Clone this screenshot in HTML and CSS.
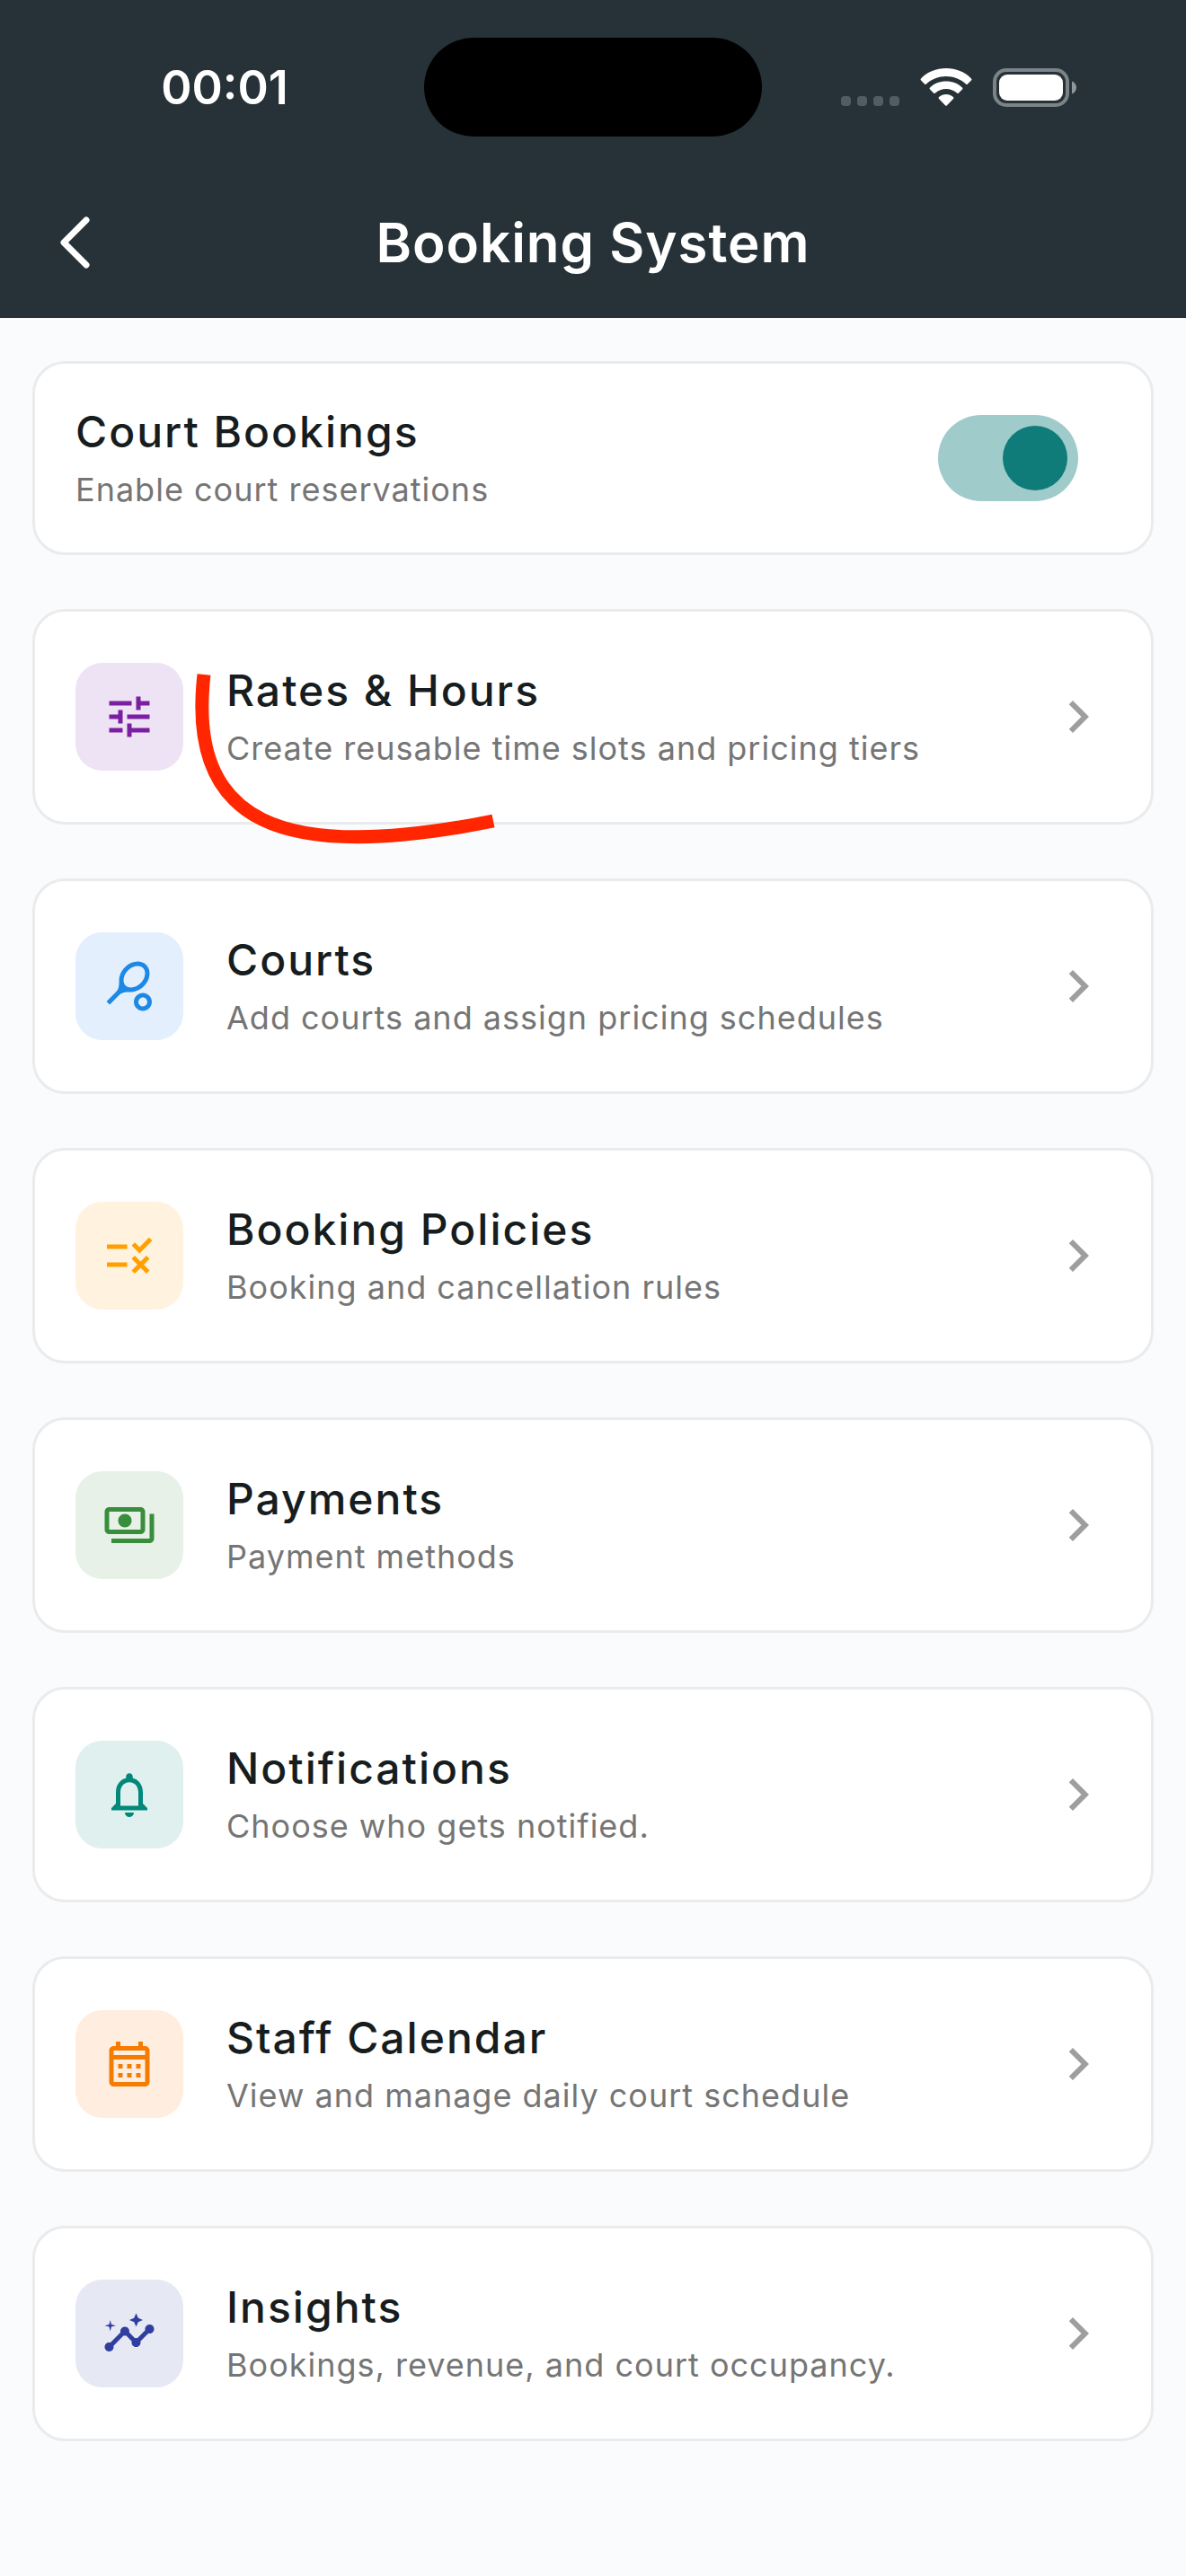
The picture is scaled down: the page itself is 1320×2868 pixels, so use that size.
FILE: index.html
```
<!DOCTYPE html>
<html lang="en">
<head>
    <meta charset="UTF-8">
    <meta name="viewport" content="width=device-width, initial-scale=1.0">
    <title>Booking System</title>
    <link rel="stylesheet" href="styles.css">
</head>
<body>

<header class="header">
    <div class="status-bar">
        <span class="time">00:01</span>
        <div class="island"></div>
        <div class="status-icons">
            <svg class="signal" viewBox="0 0 65 12" width="65" height="12" aria-hidden="true">
                <rect x="0" width="11" height="11" rx="4"/>
                <rect x="18" width="11" height="11" rx="4"/>
                <rect x="36" width="11" height="11" rx="4"/>
                <rect x="54" width="11" height="11" rx="4"/>
            </svg>
            <svg class="wifi" viewBox="0 0 58 43" width="58" height="43" aria-hidden="true">
                <path d="M29 0C18 0 8 4 1 11.500Q0 12.500 1 13.500L5 17.500Q6 18.500 7 17.500C13 12 20.500 9 29 9S45 12 51 17.500Q52 18.500 53 17.500L57 13.500Q58 12.500 57 11.500C50 4 40 0 29 0z"/>
                <path d="M29 14.500C22 14.500 15.500 17 11 21.500Q10 22.500 11 23.500L15 27.500Q16 28.500 17 27.500C20.500 24.500 24.500 23 29 23S37.500 24.500 41 27.500Q42 28.500 43 27.500L47 23.500Q48 22.500 47 21.500C42.500 17 36 14.500 29 14.500z"/>
                <path d="M29 29C26 29 23.500 30 21 32Q20 33 21 34L28 41.300Q29 42.300 30 41.300L37 34Q38 33 37 32C34.500 30 32 29 29 29z"/>
            </svg>
            <svg class="battery" viewBox="0 0 93 43" width="93" height="43" aria-hidden="true">
                <rect x="2" y="2" width="81" height="39" rx="13" fill="none" stroke="#7c8488" stroke-width="4"/>
                <rect x="7" y="7" width="71" height="29" rx="9" fill="#fff"/>
                <path d="M88 14.500c3 1 5 4 5 7s-2 6-5 7z" fill="#90979a"/>
            </svg>
        </div>
    </div>
    <div class="app-bar">
        <button class="back" type="button" aria-label="Back">
            <svg viewBox="0 0 36 60" width="36" height="60" aria-hidden="true">
                <path d="M30 5L5 30l25 25"/>
            </svg>
        </button>
        <h1>Booking System</h1>
    </div>
</header>

<main class="content">
    <div class="card card-toggle">
        <label class="text" for="court-bookings">
            <span class="title">Court Bookings</span>
            <span class="subtitle">Enable court reservations</span>
        </label>
        <input type="checkbox" id="court-bookings" class="switch" checked>
    </div>

    <a class="card" href="#rates">
        <span class="icon purple">
            <svg viewBox="0 0 24 24" aria-hidden="true"><path d="M3 17v2h6v-2H3zM3 5v2h10V5H3zm10 16v-2h8v-2h-8v-2h-2v6h2zM7 9v2H3v2h4v2h2V9H7zm14 4v-2H11v2h10zm-6-4h2V7h4V5h-4V3h-2v6z"/></svg>
        </span>
        <span class="text">
            <span class="title">Rates &amp; Hours</span>
            <span class="subtitle">Create reusable time slots and pricing tiers</span>
        </span>
        <svg class="chevron" viewBox="0 0 24 24" aria-hidden="true"><path d="M10 6L8.590 7.410 13.170 12l-4.580 4.590L10 18l6-6z"/></svg>
        <svg class="marker" viewBox="0 0 350 200" width="350" height="200" aria-hidden="true">
            <path d="M17 11C-2 176 102 222 339 174"/>
        </svg>
    </a>

    <a class="card" href="#courts">
        <span class="icon blue">
            <svg viewBox="0 0 24 24" aria-hidden="true"><path d="M19.520 2.490c-2.340-2.340-6.620-1.870-9.550 1.060-1.600 1.600-2.520 3.870-2.540 5.460-.02 1.580.26 3.890-1.350 5.500l-4.240 4.240 1.420 1.420 4.240-4.240c1.610-1.610 3.920-1.330 5.500-1.350s3.860-.94 5.460-2.540c2.920-2.930 3.400-7.210 1.060-9.550zm-9.200 9.190c-1.530-1.530-1.050-4.610 1.060-6.720s5.180-2.590 6.720-1.060c1.530 1.530 1.050 4.610-1.060 6.720s-5.180 2.590-6.720 1.060zM18 17c.53 0 1.040.21 1.410.59.78.78.78 2.050 0 2.830-.37.37-.88.58-1.410.58s-1.040-.21-1.410-.59c-.78-.78-.78-2.050 0-2.830.37-.37.88-.58 1.410-.58m0-2c-1.020 0-2.050.39-2.830 1.170-1.560 1.560-1.560 4.090 0 5.660.78.78 1.810 1.170 2.830 1.170s2.050-.39 2.830-1.170c1.560-1.560 1.560-4.090 0-5.660C20.050 15.390 19.020 15 18 15z"/></svg>
        </span>
        <span class="text">
            <span class="title">Courts</span>
            <span class="subtitle">Add courts and assign pricing schedules</span>
        </span>
        <svg class="chevron" viewBox="0 0 24 24" aria-hidden="true"><path d="M10 6L8.590 7.410 13.170 12l-4.580 4.590L10 18l6-6z"/></svg>
    </a>

    <a class="card" href="#policies">
        <span class="icon amber">
            <svg viewBox="0 0 24 24" aria-hidden="true"><path d="M16.540 11L13 7.460l1.410-1.410 2.120 2.120 4.240-4.240 1.410 1.410L16.540 11zM11 7H2v2h9V7zm10 6.410L19.590 12 17 14.590 14.410 12 13 13.410 15.590 16 13 18.590 14.410 20 17 17.410 19.590 20 21 18.590 18.410 16 21 13.410zM11 15H2v2h9v-2z"/></svg>
        </span>
        <span class="text">
            <span class="title">Booking Policies</span>
            <span class="subtitle">Booking and cancellation rules</span>
        </span>
        <svg class="chevron" viewBox="0 0 24 24" aria-hidden="true"><path d="M10 6L8.590 7.410 13.170 12l-4.580 4.590L10 18l6-6z"/></svg>
    </a>

    <a class="card" href="#payments">
        <span class="icon green">
            <svg viewBox="0 0 24 24" aria-hidden="true"><path d="M19 14V6c0-1.100-.9-2-2-2H3c-1.100 0-2 .9-2 2v8c0 1.100.9 2 2 2h14c1.100 0 2-.9 2-2zm-2 0H3V6h14v8zm-7-7c-1.660 0-3 1.340-3 3s1.340 3 3 3 3-1.340 3-3-1.340-3-3-3zm13 0v11c0 1.100-.9 2-2 2H4v-2h17V7h2z"/></svg>
        </span>
        <span class="text">
            <span class="title">Payments</span>
            <span class="subtitle">Payment methods</span>
        </span>
        <svg class="chevron" viewBox="0 0 24 24" aria-hidden="true"><path d="M10 6L8.590 7.410 13.170 12l-4.580 4.590L10 18l6-6z"/></svg>
    </a>

    <a class="card" href="#notifications">
        <span class="icon teal">
            <svg viewBox="0 0 24 24" aria-hidden="true"><path d="M12 22c1.100 0 2-.9 2-2h-4c0 1.100.9 2 2 2zm6-6v-5c0-3.070-1.630-5.640-4.500-6.320V4c0-.83-.67-1.500-1.500-1.500s-1.500.67-1.500 1.500v.68C7.640 5.360 6 7.920 6 11v5l-2 2v1h16v-1l-2-2zm-2 1H8v-6c0-2.480 1.510-4.500 4-4.500s4 2.020 4 4.500v6z"/></svg>
        </span>
        <span class="text">
            <span class="title">Notifications</span>
            <span class="subtitle">Choose who gets notified.</span>
        </span>
        <svg class="chevron" viewBox="0 0 24 24" aria-hidden="true"><path d="M10 6L8.590 7.410 13.170 12l-4.580 4.590L10 18l6-6z"/></svg>
    </a>

    <a class="card" href="#calendar">
        <span class="icon orange">
            <svg viewBox="0 0 24 24" aria-hidden="true"><path d="M19 4h-1V2h-2v2H8V2H6v2H5c-1.110 0-1.990.9-1.990 2L3 20c0 1.100.89 2 2 2h14c1.100 0 2-.9 2-2V6c0-1.100-.9-2-2-2zm0 16H5V10h14v10zm0-12H5V6h14v2zM9 14H7v-2h2v2zm4 0h-2v-2h2v2zm4 0h-2v-2h2v2zm-8 4H7v-2h2v2zm4 0h-2v-2h2v2zm4 0h-2v-2h2v2z"/></svg>
        </span>
        <span class="text">
            <span class="title">Staff Calendar</span>
            <span class="subtitle">View and manage daily court schedule</span>
        </span>
        <svg class="chevron" viewBox="0 0 24 24" aria-hidden="true"><path d="M10 6L8.590 7.410 13.170 12l-4.580 4.590L10 18l6-6z"/></svg>
    </a>

    <a class="card" href="#insights">
        <span class="icon indigo">
            <svg viewBox="0 0 24 24" aria-hidden="true"><path d="M21 8c-1.450 0-2.260 1.440-1.930 2.510l-3.550 3.560c-.3-.09-.74-.09-1.040 0l-2.550-2.550C12.270 10.450 11.460 9 10 9c-1.450 0-2.270 1.440-1.930 2.520l-4.560 4.550C2.440 15.740 1 16.550 1 18c0 1.100.9 2 2 2 1.450 0 2.260-1.440 1.930-2.510l4.550-4.560c.3.09.74.09 1.040 0l2.550 2.550C12.730 16.550 13.540 18 15 18c1.450 0 2.270-1.440 1.930-2.520l3.560-3.550C21.560 12.260 23 11.450 23 10c0-1.100-.9-2-2-2zM15 9l.94-2.070L18 6l-2.060-.93L15 3l-.92 2.070L12 6l2.080.93zM3.500 11L4 9l2-.5L4 8l-.5-2L3 8l-2 .5L3 9z"/></svg>
        </span>
        <span class="text">
            <span class="title">Insights</span>
            <span class="subtitle">Bookings, revenue, and court occupancy.</span>
        </span>
        <svg class="chevron" viewBox="0 0 24 24" aria-hidden="true"><path d="M10 6L8.590 7.410 13.170 12l-4.580 4.590L10 18l6-6z"/></svg>
    </a>
</main>

</body>
</html>
```
FILE: styles.css
```
* {
    box-sizing: border-box;
}
body {
    margin: 0;
    min-height: 100vh;
    background: #fafbfd;
    color: #171d1e;
    font-family: Inter, Roboto, sans-serif;
}
.header {
    background: #273238;
    color: #fff;
}
.status-bar {
    display: grid;
    grid-template-columns: 1fr 376px 1fr;
    align-items: center;
    padding: 42px 0 34px;
}
.time {
    padding-left: 28px;
    font-size: 52px;
    font-weight: 600;
    text-align: center;
}
.island {
    height: 110px;
    border-radius: 55px;
    background: #000;
}
.status-icons {
    display: flex;
    justify-content: flex-end;
    align-items: flex-end;
    gap: 23px;
    padding-right: 122px;
}
.signal {
    fill: #525c63;
}
.wifi {
    fill: #fff;
}
.app-bar {
    display: grid;
    grid-template-columns: 168px 1fr 168px;
    align-items: center;
    height: 168px;
}
.app-bar h1 {
    margin: 0;
    font-size: 60px;
    font-weight: 600;
    letter-spacing: 1px;
    text-align: center;
}
.back {
    display: flex;
    justify-content: center;
    align-items: center;
    height: 144px;
    padding: 0;
    border: 0;
    background: none;
}
.back path {
    fill: none;
    stroke: #fff;
    stroke-width: 7;
    stroke-linecap: round;
    stroke-linejoin: round;
}
.content {
    display: flex;
    flex-direction: column;
    gap: 60px;
    padding: 48px 36px;
}
.card {
    position: relative;
    display: flex;
    align-items: center;
    gap: 48px;
    min-height: 240px;
    padding: 32px 45px;
    border: 3px solid #e9ebed;
    border-radius: 36px;
    background: #fff;
    color: inherit;
    text-decoration: none;
}
.card-toggle {
    min-height: 216px;
    padding-right: 81px;
}
.text {
    display: flex;
    flex: 1;
    flex-direction: column;
    gap: 6px;
}
.title {
    font-size: 48px;
    font-weight: 500;
    line-height: 64px;
    letter-spacing: 2px;
}
.subtitle {
    color: #757575;
    font-size: 36px;
    line-height: 52px;
    letter-spacing: 1px;
}
.switch {
    appearance: none;
    width: 156px;
    height: 96px;
    margin: 0;
    padding: 12px;
    border-radius: 48px;
    background: #c4c8ca;
}
.switch::before {
    content: "";
    display: block;
    width: 72px;
    height: 72px;
    border-radius: 50%;
    background: #fff;
}
.switch:checked {
    background: #9fcbca;
}
.switch:checked::before {
    margin-left: auto;
    background: #0f7c7a;
}
.icon {
    display: flex;
    justify-content: center;
    align-items: center;
    width: 120px;
    height: 120px;
    border-radius: 30px;
}
.icon svg {
    width: 60px;
    height: 60px;
    fill: currentColor;
}
.purple {
    background: #eee3f4;
    color: #7b1fa2;
}
.blue {
    background: #e3effc;
    color: #1e88e5;
}
.amber {
    background: #fff3e0;
    color: #ffa000;
}
.green {
    background: #e7f1e7;
    color: #388e3c;
}
.teal {
    background: #e0f0ee;
    color: #00897b;
}
.orange {
    background: #ffeee0;
    color: #f57c00;
}
.indigo {
    background: #e6e8f4;
    color: #303f9f;
}
.chevron {
    width: 72px;
    height: 72px;
    fill: #9e9e9e;
}
/* red pen stroke over the card */
.marker {
    position: absolute;
    top: 59px;
    left: 171px;
    z-index: 1;
}
.marker path {
    fill: none;
    stroke: #ff2600;
    stroke-width: 15;
}
```
